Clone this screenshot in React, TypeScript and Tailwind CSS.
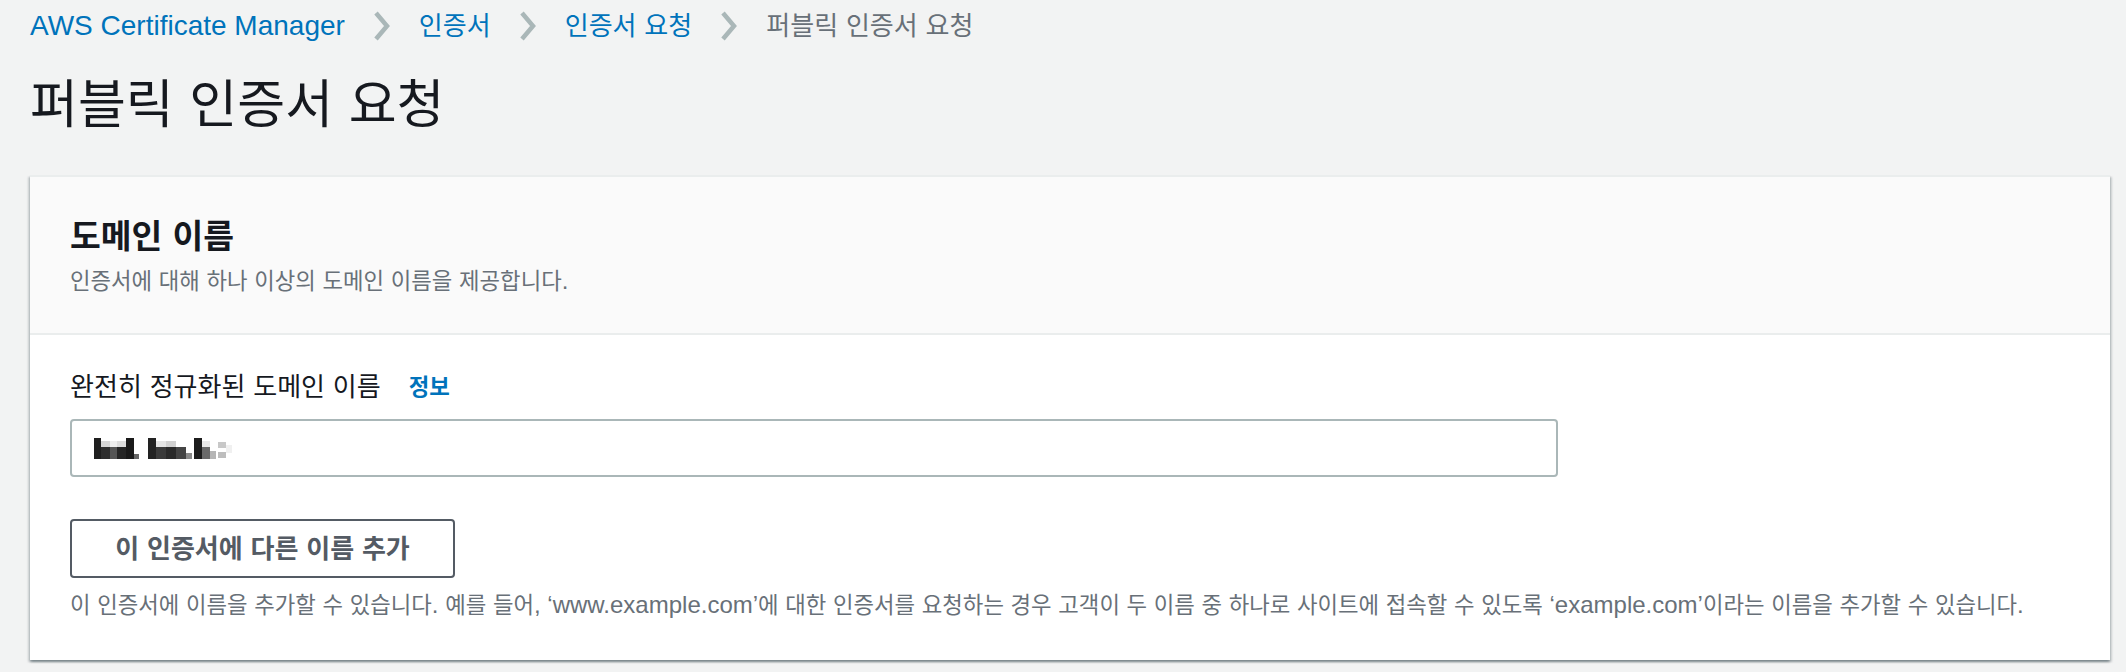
const HANGUL_SPLIT = /([\uAC00-\uD7A3]+)/
const HANGUL_ONLY = /^[\uAC00-\uD7A3]+$/

// Hangul glyphs in the reference are narrower than Latin at the same size
function K({ t }: { t: string }) {
  return (
    <span>
      {t.split(HANGUL_SPLIT).map((part, i) =>
        HANGUL_ONLY.test(part) ? (
          <span key={i} className="text-[0.93em] leading-none">
            {part}
          </span>
        ) : (
          part
        )
      )}
    </span>
  )
}

function Chevron() {
  return (
    <svg width="18" height="30" viewBox="0 0 18 30" aria-hidden="true">
      <polyline points="3,2 14,15 3,28" fill="none" stroke="#aab7b8" strokeWidth="4.5" />
    </svg>
  )
}

// pixelated redaction of the typed domain
const mosaic: [number, number, number, number, string][] = [
  [0, 1, 7, 21, '#1f1f1f'],
  [7, 4, 9, 6, '#d6d6d6'],
  [7, 10, 9, 12, '#2e2e2e'],
  [16, 4, 7, 6, '#eeeeee'],
  [16, 10, 7, 12, '#555555'],
  [23, 4, 9, 6, '#dddddd'],
  [23, 10, 9, 12, '#262626'],
  [32, 1, 8, 21, '#1a1a1a'],
  [40, 17, 5, 5, '#666666'],
  [54, 1, 8, 21, '#222222'],
  [62, 4, 10, 6, '#e4e4e4'],
  [62, 10, 10, 12, '#3a3a3a'],
  [72, 4, 10, 6, '#d0d0d0'],
  [72, 10, 10, 12, '#2a2a2a'],
  [82, 10, 10, 12, '#444444'],
  [92, 16, 6, 6, '#8a8a8a'],
  [100, 1, 8, 21, '#1d1d1d'],
  [108, 4, 8, 6, '#e8e8e8'],
  [108, 10, 8, 12, '#6a6a6a'],
  [116, 14, 6, 8, '#b5b5b5'],
  [124, 5, 8, 6, '#c8c8c8'],
  [124, 15, 8, 6, '#bdbdbd'],
  [132, 8, 6, 8, '#f0f0f0'],
]

function Redacted() {
  return (
    <svg width="142" height="23" viewBox="0 0 142 23" aria-hidden="true">
      {mosaic.map(([x, y, w, h, c], i) => (
        <rect key={i} x={x} y={y} width={w} height={h} fill={c} />
      ))}
    </svg>
  )
}

export default function App() {
  return (
    <div className="min-h-screen w-full bg-[#f2f3f3] pl-[30px] pr-[16px] font-['Liberation_Sans','Noto_Sans_CJK_KR',sans-serif]">
      {/* breadcrumb */}
      <nav className="flex h-[52px] items-center gap-[28px] text-[28px] leading-[34px]">
        <span className="text-[#0073bb]">AWS Certificate Manager</span>
        <Chevron />
        <span className="text-[#0073bb]">
          <K t="인증서" />
        </span>
        <Chevron />
        <span className="text-[#0073bb]">
          <K t="인증서 요청" />
        </span>
        <Chevron />
        <span className="text-[#687078]">
          <K t="퍼블릭 인증서 요청" />
        </span>
      </nav>

      <h1 className="mt-[20px] text-[56px] leading-[64px] text-[#16191f]">
        <K t="퍼블릭 인증서 요청" />
      </h1>

      {/* card */}
      <section className="mt-[39px] border-t-2 border-[#eaeded] bg-white shadow-[0_2px_2px_0_rgba(0,28,36,0.3),2px_2px_2px_0_rgba(0,28,36,0.15),-2px_2px_2px_0_rgba(0,28,36,0.15)]">
        <header className="border-b-2 border-[#eaeded] bg-[#fafafa] px-[40px] pt-[37px] pb-[37px]">
          <h2 className="text-[36px] font-bold leading-[44px] text-[#16191f]">
            <K t="도메인 이름" />
          </h2>
          <p className="mt-[8px] text-[24px] leading-[30px] text-[#687078]">
            <K t="인증서에 대해 하나 이상의 도메인 이름을 제공합니다." />
          </p>
        </header>

        <div className="px-[40px] pt-[35px] pb-[40px]">
          <div className="flex items-center gap-[28px] leading-[34px]">
            <span className="text-[28px] text-[#16191f]">
              <K t="완전히 정규화된 도메인 이름" />
            </span>
            <span className="text-[24px] font-bold text-[#0073bb]">
              <K t="정보" />
            </span>
          </div>

          <div className="mt-[15px] flex h-[58px] w-[1488px] items-center rounded-[4px] border-2 border-[#aab7b8] bg-white pl-[22px]">
            <Redacted />
          </div>

          <button className="mt-[42px] flex h-[59px] w-[385px] items-center justify-center rounded-[4px] border-2 border-[#545b64] bg-white text-[28px] font-bold leading-[34px] text-[#545b64]">
            <K t="이 인증서에 다른 이름 추가" />
          </button>

          <p className="mt-[12px] text-[24px] leading-[30px] text-[#687078]">
            <K t="이 인증서에 이름을 추가할 수 있습니다. 예를 들어, ‘www.example.com’에 대한 인증서를 요청하는 경우 고객이 두 이름 중 하나로 사이트에 접속할 수 있도록 ‘example.com’이라는 이름을 추가할 수 있습니다." />
          </p>
        </div>
      </section>
    </div>
  )
}
